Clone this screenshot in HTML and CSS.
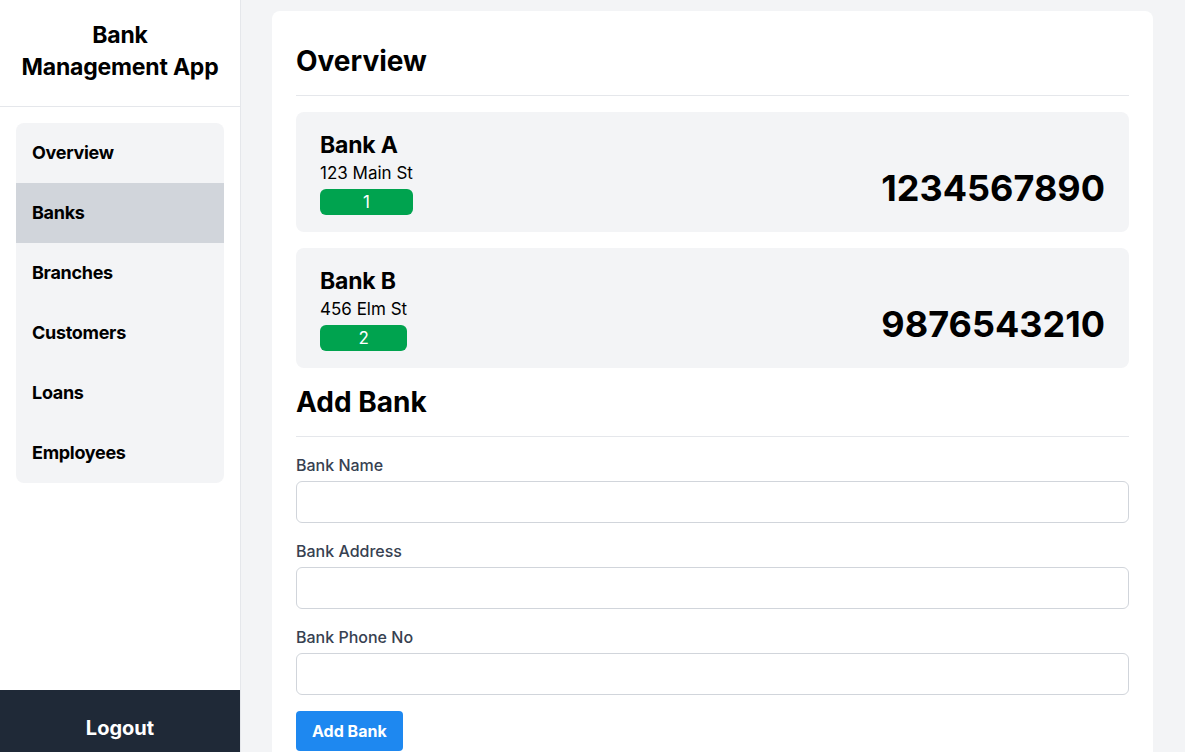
FILE: index.html
```html
<!DOCTYPE html>
<html lang="en">
<head>
<meta charset="utf-8">
<title>Bank Management App</title>
<link rel="stylesheet" href="styles.css">
</head>
<body>
<div class="layout">
  <aside class="sidebar">
    <div class="brand">Bank<br>Management App</div>
    <nav class="nav">
      <a class="nav-item">Overview</a>
      <a class="nav-item active">Banks</a>
      <a class="nav-item">Branches</a>
      <a class="nav-item">Customers</a>
      <a class="nav-item">Loans</a>
      <a class="nav-item">Employees</a>
    </nav>
    <div class="spacer"></div>
    <button class="logout">Logout</button>
  </aside>
  <main class="main">
    <section class="panel">
      <h1 class="section-title">Overview</h1>
      <div class="bank-list">
        <div class="bank-card">
          <div class="bank-info">
            <div class="bank-name">Bank A</div>
            <div class="bank-address">123 Main St</div>
            <div class="badge">1</div>
          </div>
          <div class="bank-phone">1234567890</div>
        </div>
        <div class="bank-card">
          <div class="bank-info">
            <div class="bank-name">Bank B</div>
            <div class="bank-address">456 Elm St</div>
            <div class="badge">2</div>
          </div>
          <div class="bank-phone">9876543210</div>
        </div>
      </div>
      <h2 class="section-title second">Add Bank</h2>
      <form class="form">
        <div class="field">
          <label class="label">Bank Name</label>
          <input class="input" type="text">
        </div>
        <div class="field">
          <label class="label">Bank Address</label>
          <input class="input" type="text">
        </div>
        <div class="field">
          <label class="label">Bank Phone No</label>
          <input class="input" type="text">
        </div>
        <button class="submit" type="button">Add Bank</button>
      </form>
    </section>
  </main>
</div>
</body>
</html>
```

FILE: styles.css
```css
* { box-sizing: border-box; }
html, body { margin: 0; padding: 0; }
body {
  font-family: "Inter", "Liberation Sans", sans-serif;
  color: #000;
  background: #f3f4f6;
}
.layout {
  display: flex;
  align-items: flex-start;
}
.sidebar {
  width: 241px;
  flex-shrink: 0;
  height: 766px;
  background: #fff;
  border-right: 1px solid #e5e7eb;
  display: flex;
  flex-direction: column;
}
.brand {
  font-size: 23px;
  line-height: 32px;
  font-weight: 700;
  letter-spacing: -0.2px;
  text-align: center;
  padding: 19px 4px 23px;
  border-bottom: 1px solid #e5e7eb;
  white-space: nowrap;
}
.nav {
  margin: 16px 16px 0;
  background: #f3f4f6;
  border-radius: 8px;
  display: flex;
  flex-direction: column;
  overflow: hidden;
}
.nav-item {
  display: block;
  height: 60px;
  line-height: 60px;
  padding: 0 16px;
  font-size: 18px;
  font-weight: 700;
  letter-spacing: -0.3px;
  color: #000;
}
.nav-item.active { background: #d1d5db; }
.spacer { flex: 1; }
.logout {
  background: #1f2937;
  color: #fff;
  border: 0;
  font-family: inherit;
  font-size: 20px;
  font-weight: 700;
  line-height: 28px;
  padding: 24px 0;
  width: 100%;
}
.main {
  flex: 1;
  padding: 11px 32px 32px 31px;
}
.panel {
  background: #fff;
  border-radius: 8px;
  padding: 32px 24px 24px;
}
.section-title {
  margin: 0;
  font-size: 28px;
  line-height: 36px;
  font-weight: 700;
  padding-bottom: 16px;
  border-bottom: 1px solid #e5e7eb;
  margin-bottom: 16px;
}
.section-title.second { margin-top: 16px; }
.bank-list {
  display: flex;
  flex-direction: column;
  gap: 16px;
}
.bank-card {
  background: #f3f4f6;
  border-radius: 8px;
  padding: 16px 24px 17px;
  display: flex;
  justify-content: space-between;
}
.bank-info {
  display: inline-flex;
  flex-direction: column;
  align-items: stretch;
}
.bank-name {
  font-size: 23px;
  line-height: 32px;
  font-weight: 700;
  letter-spacing: -0.2px;
  padding-top: 1px;
  margin-bottom: -1px;
}
.bank-address {
  font-size: 17px;
  line-height: 26px;
}
.badge {
  margin-top: 3px;
  background: #00a34f;
  color: #fff;
  border-radius: 6px;
  text-align: center;
  font-size: 17px;
  line-height: 26px;
}
.bank-phone {
  align-self: flex-end;
  margin-bottom: 7px;
  font-size: 36px;
  line-height: 40px;
  font-weight: 700;
}
.form { display: flex; flex-direction: column; align-items: flex-start; }
.field {
  width: 100%;
  display: flex;
  flex-direction: column;
  margin-bottom: 16px;
}
.label {
  font-size: 16px;
  line-height: 24px;
  font-weight: 500;
  color: #374151;
  margin-bottom: 4px;
}
.input {
  height: 42px;
  border: 1px solid #d1d5db;
  border-radius: 6px;
  font-family: inherit;
  font-size: 16px;
  padding: 8px 12px;
}
.submit {
  background: #1e88f0;
  color: #fff;
  border: 0;
  border-radius: 4px;
  font-family: inherit;
  font-size: 16px;
  font-weight: 700;
  line-height: 24px;
  padding: 8px 16px;
}
```
